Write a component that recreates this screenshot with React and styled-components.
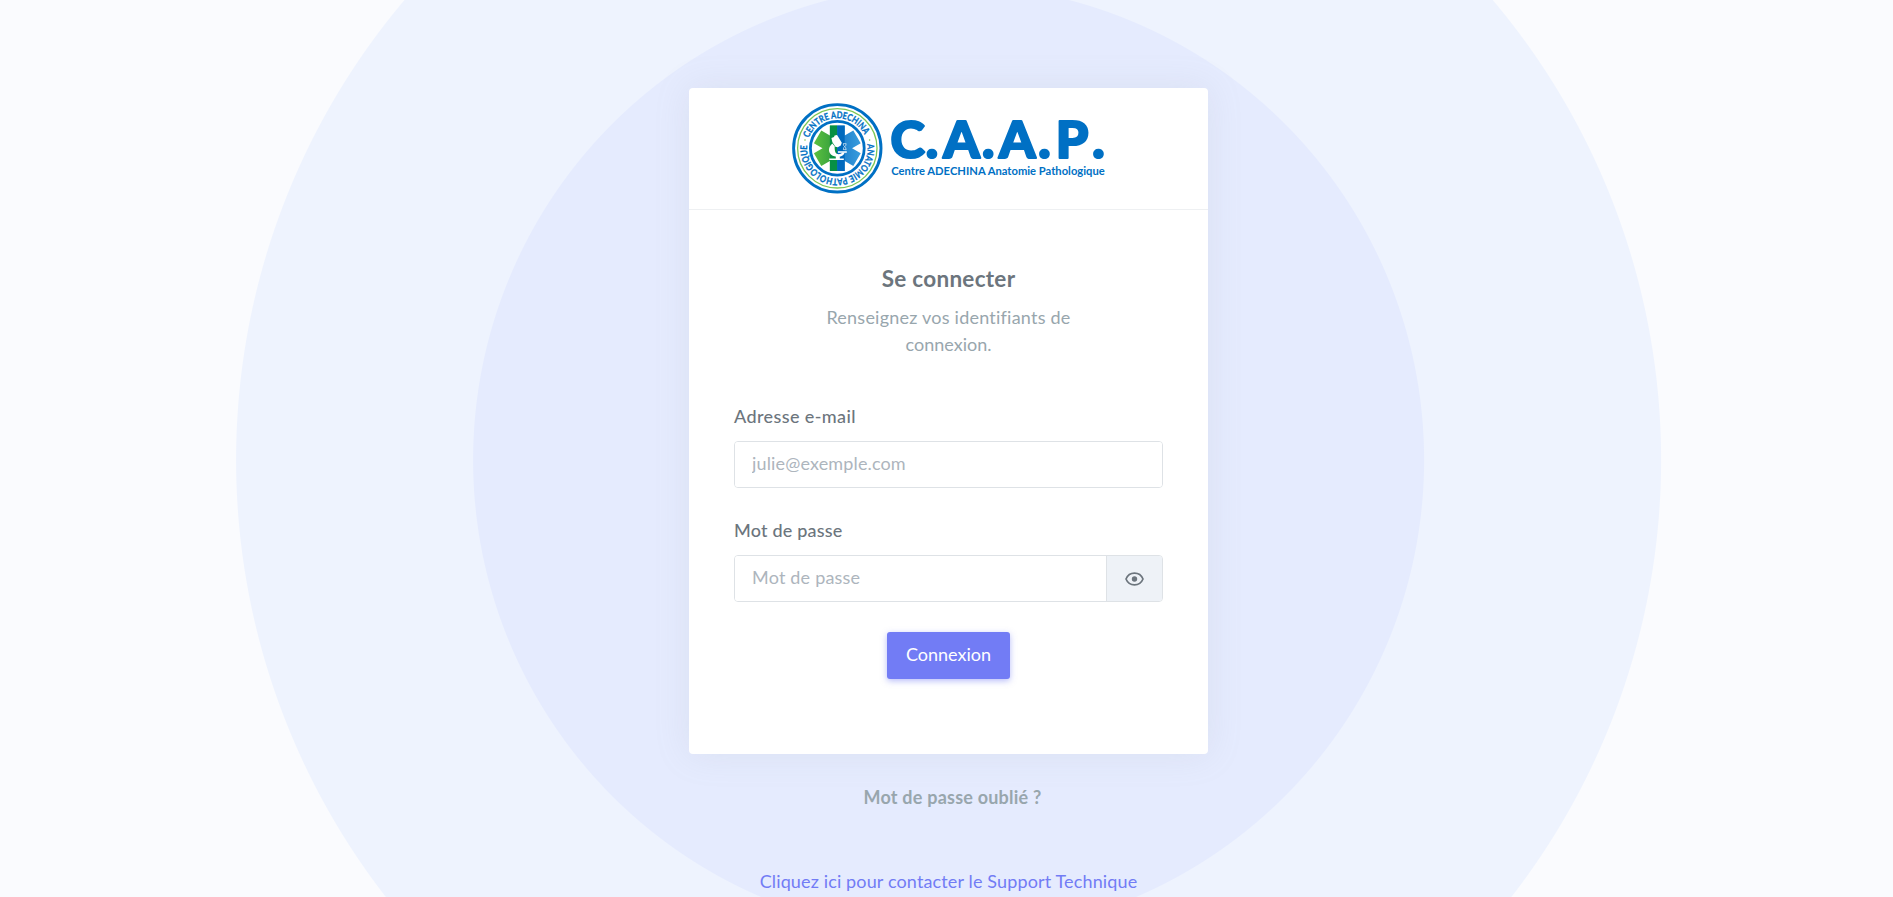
import React from "react";
import styled, { createGlobalStyle } from "styled-components";

const GlobalStyle = createGlobalStyle`
  * { box-sizing: border-box; }
  html, body { margin: 0; height: 100%; overflow: hidden; }
  body {
    background: #fafbfe;
    color: #6c757d;
    font: 400 18px/27px Lato, "Open Sans", sans-serif;
  }
`;

const Page = styled.div`
  height: 897px;
  overflow: hidden;
  padding: 88px 0 0 4px;
  display: flex;
  flex-direction: column;
  align-items: center;
  background:
    radial-gradient(circle at 948.6px 460px, #e5ebfe 475px, #eef3fe 476px, #eef3fe 712px, #fafbfe 713px);
`;

const Card = styled.main`
  width: 519px;
  height: 666px;
  background: #fff;
  border-radius: 4px;
  box-shadow: 0 0 35px rgba(154, 161, 171, 0.15);
`;

const CardHeader = styled.header`
  height: 122px;
  padding-top: 14px;
  display: flex;
  justify-content: center;
  border-bottom: 1px solid #eef0f2;
`;

const Form = styled.form`
  padding: 55px 45px 0;
  display: flex;
  flex-direction: column;
`;

const Fit = styled.span`
  letter-spacing: ${(p) => p.$ls || 0}px;
`;

const Title = styled.h1`
  margin: 0 0 12px;
  font-size: 22.5px;
  line-height: 27px;
  font-weight: 700;
  text-align: center;
`;

const Intro = styled.p`
  width: 322px;
  margin: 0 auto 45px;
  padding: 0 30px;
  color: #98a6ad;
  text-align: center;
`;

const Label = styled.label`
  margin-bottom: 11px;
  height: 27px;
  font-weight: 500;
`;

const Group = styled.div`
  display: flex;
  height: 47px;
  margin-bottom: ${(p) => p.$gap}px;
  border: 1px solid #dee2e6;
  border-radius: 4px;
  overflow: hidden;
`;

const Input = styled.input`
  flex: 1;
  min-width: 0;
  padding: 0 17px 2px;
  border: 0;
  outline: 0;
  font: inherit;
  background: #fff;
  letter-spacing: ${(p) => p.$ls || 0}px;
  &::placeholder { color: #adb5bd; opacity: 1; }
`;

const Reveal = styled.span`
  width: 56px;
  display: flex;
  align-items: center;
  justify-content: center;
  background: #eef2f7;
  border-left: 1px solid #dee2e6;
`;

const Submit = styled.button`
  align-self: center;
  width: 123px;
  height: 47px;
  padding: 0 0 2px;
  border: 0;
  border-radius: 3px;
  color: #fff;
  background: #727cf5;
  box-shadow: 0 2px 6px rgba(114, 124, 245, 0.5);
  font: inherit;
`;

const Forgot = styled.a`
  margin: 30px 0 0 8px;
  color: #98a6ad;
  font-weight: 700;
`;

const Support = styled.a`
  margin-top: 57px;
  color: #727cf5;
`;

const LogoMark = styled.svg`
  display: block;
  overflow: visible;
  font-family: Lato, sans-serif;
`;

const BLUE = "#0070c4";

function Logo() {
  return (
    <LogoMark width="314" height="92" viewBox="792 102 314 92" fill={BLUE}>
      <defs>
        <linearGradient id="arms" x1="0" x2="1">
          <stop offset="0" stopColor="#5cc040" />
          <stop offset="0.5" stopColor="#2f9a3c" />
          <stop offset="0.5" stopColor="#1779c9" />
          <stop offset="1" stopColor="#3a9ddd" />
        </linearGradient>
        <path id="topArc" d="M808.9 138 A30.2 30.2 0 0 1 867 143.1" />
        <path id="lowArc" d="M867.2 144.1 A30.2 30.2 0 1 1 808.2 140.3" />
      </defs>
      <circle cx="837.3" cy="148.3" r="43.7" fill="#fff" stroke={BLUE} strokeWidth="2.9" />
      <circle cx="837.3" cy="148.3" r="39.7" fill="none" stroke="#7cc655" strokeWidth="1.3" />
      <circle cx="837.3" cy="148.3" r="26.9" fill="none" stroke={BLUE} strokeWidth="2.8" />
      <circle cx="869.6" cy="140" r="0.8" fill="#7cc655" />
      <circle cx="805" cy="140" r="0.8" fill="#7cc655" />
      <g fontSize="9.4" fontWeight="700" stroke={BLUE} strokeWidth="0.3">
        <text><textPath href="#topArc" textLength="70" lengthAdjust="spacingAndGlyphs">CENTRE ADECHINA</textPath></text>
        <text><textPath href="#lowArc" textLength="102" lengthAdjust="spacingAndGlyphs">ANATOMIE PATHOLOGIQUE</textPath></text>
      </g>
      <path
        fill="url(#arms)"
        d="M829.9 125.6h14.8v9.9l8.6-5 7.4 12.8-8.6 5 8.6 5-7.4 12.8-8.6-5v9.9h-14.8v-9.9l-8.6 5-7.4-12.8 8.6-5-8.6-5 7.4-12.8 8.6 5z"
      />
      <path fill="#079044" d="M829.9 125.6h7.4v45.4h-7.4z" />
      <path fill="#0069bd" d="M837.3 125.6h7.4v45.4h-7.4z" />
      <g fill="#fff">
        <path d="M831.4 138l2.6-1.1.6-1.3 2.4-.6 1 1.6 3.8 6.2-1 2.6-3 1.8-2.4-.4-3-4.6zM829.2 158.4h14.6v1.6h-14.6zM835.8 156h4v2.5h-4zM838 151.2h8.8v1.5H838z" />
        <path d="M832.4 143.4c-5.2 4.1-4.7 11.3 2.9 13.2h5.4c2.2-.7 3.4-2.3 4-4h-2.4c-2 2.4-6 2-7-.6-.8-2.4-.7-4.6-.5-5.4z" />
      </g>
      <path d="M843 143.6h3.4M843 149.6h3.4M843.3 144c0 3 2.8 2.4 2.8 5.4M846.1 144c0 3-2.8 2.4-2.8 5.4" fill="none" stroke="#fff" strokeWidth="0.8" opacity="0.75" />
      <text
        x="890.4 925.7 943.2 982 998.9 1038.2 1055.7 1092.2"
        y="157.6"
        fontWeight="900"
        fontSize="52"
        stroke={BLUE}
        strokeWidth="2.2"
        strokeLinejoin="round"
      >
        C.A.A.P.
      </text>
      <text x="891.3" y="174.8" fontSize="11.8" fontWeight="700" textLength="213.4" lengthAdjust="spacingAndGlyphs">
        Centre ADECHINA Anatomie Pathologique
      </text>
    </LogoMark>
  );
}

function Eye() {
  return (
    <svg width="19" height="14" viewBox="0 0 19 14" fill="none" stroke="#6c757d" strokeWidth="1.7">
      <path d="M1 7C4.2-.9 14.8-.9 18 7C14.8 14.9 4.2 14.9 1 7Z" />
      <circle cx="9.5" cy="7" r="2.7" fill="#6c757d" stroke="none" />
    </svg>
  );
}

export default function App() {
  return (
    <>
      <GlobalStyle />
      <Page>
        <Card>
          <CardHeader><Logo /></CardHeader>
          <Form>
            <Title><Fit $ls={0.28}>Se connecter</Fit></Title>
            <Intro><Fit $ls={0.23}>Renseignez vos identifiants de</Fit> connexion.</Intro>
            <Label><Fit $ls={0.39}>Adresse e-mail</Fit></Label>
            <Group $gap={29}><Input $ls={0.15} placeholder="julie@exemple.com" /></Group>
            <Label><Fit $ls={0.2}>Mot de passe</Fit></Label>
            <Group $gap={30}>
              <Input $ls={0.2} type="password" placeholder="Mot de passe" />
              <Reveal><Eye /></Reveal>
            </Group>
            <Submit type="button">Connexion</Submit>
          </Form>
        </Card>
        <Forgot><Fit $ls={0.22}>Mot de passe oublié ?</Fit></Forgot>
        <Support><Fit $ls={0.14}>Cliquez ici pour contacter le Support Technique</Fit></Support>
      </Page>
    </>
  );
}
